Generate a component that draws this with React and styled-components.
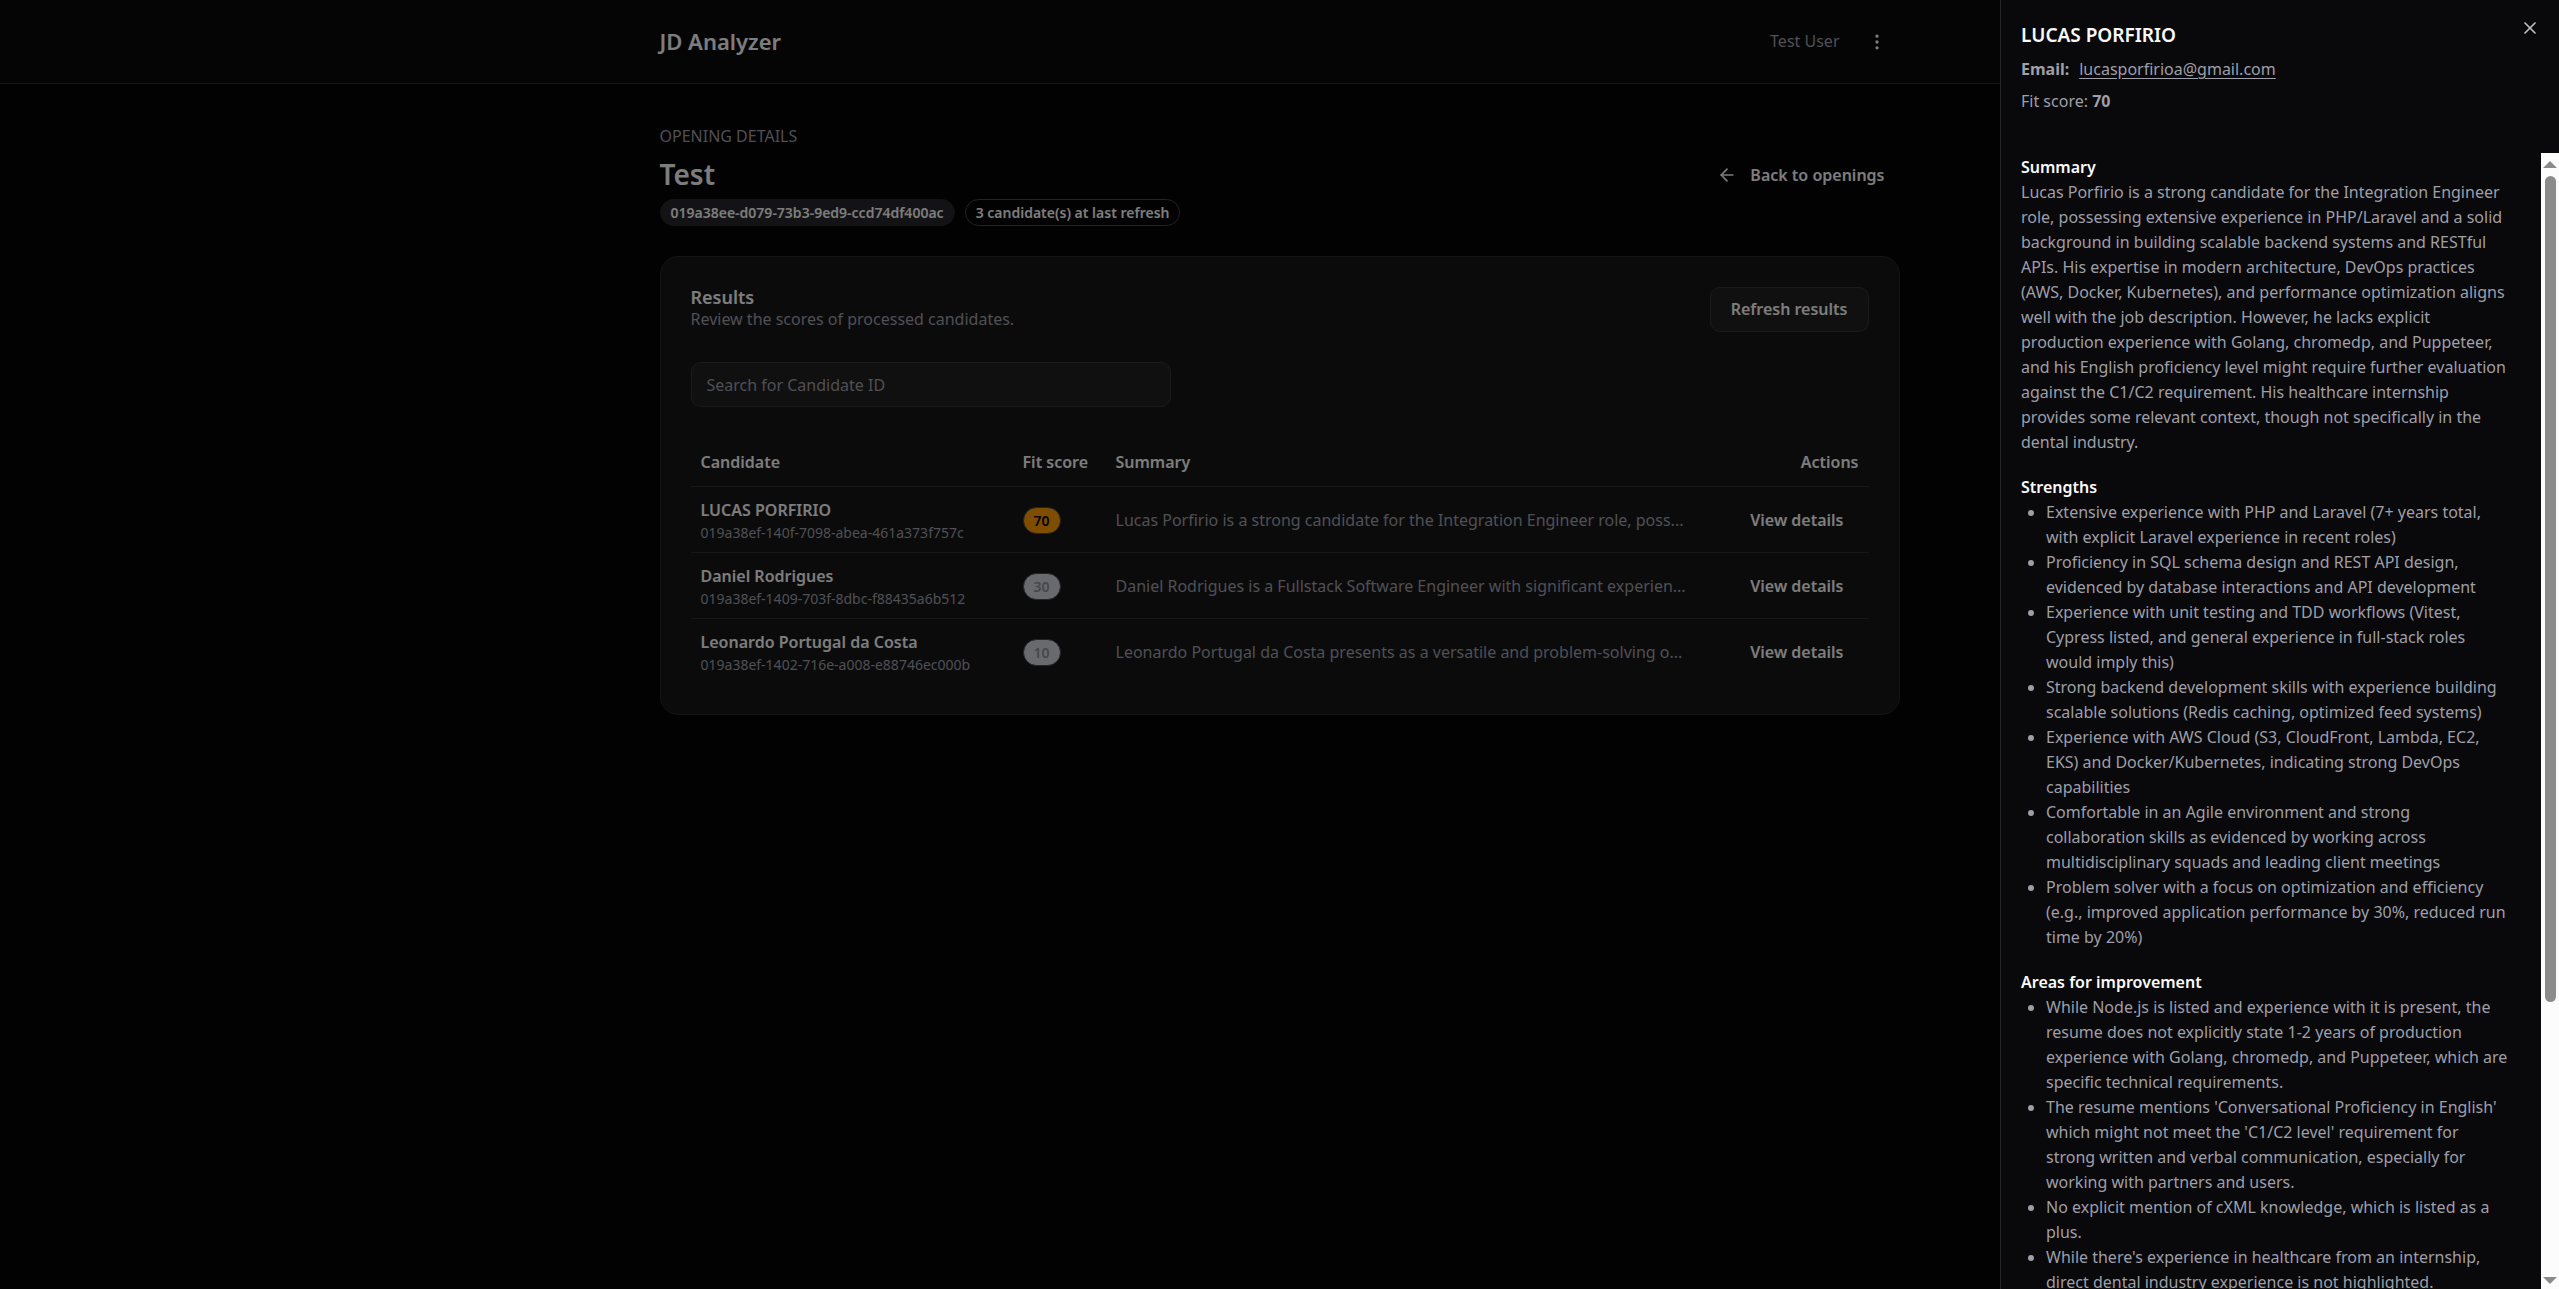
import React from "react";
import styled, { createGlobalStyle } from "styled-components";
import { ArrowLeft, EllipsisVertical, X } from "lucide-react";

const GlobalStyle = createGlobalStyle`
  *, *::before, *::after { box-sizing: border-box; }
  body {
    margin: 0;
    background: #040405;
    color: #fafafa;
    font-family: "Noto Sans", "Open Sans", sans-serif;
    font-size: 16px;
    line-height: 25px;
  }
  h1, h2, h3, p, ul { margin: 0; padding: 0; font-size: inherit; font-weight: inherit; }
  button, input { font: inherit; color: inherit; }
  button { cursor: pointer; }
`;

const Page = styled.div`
  min-height: 100vh;
`;

const Container = styled.div`
  width: 100%;
  max-width: 1280px;
  margin: 0 auto;
  padding: 0 20px;
`;

const TopBar = styled.header`
  background: #0a0a0d;
  border-bottom: 1px solid #2c2c2f;
`;

const TopBarRow = styled(Container)`
  display: flex;
  align-items: center;
  justify-content: space-between;
  height: 83px;
`;

const Brand = styled.span`
  font-size: 22px;
  font-weight: 600;
`;

const UserArea = styled.div`
  display: flex;
  align-items: center;
  gap: 15px;
  color: #9f9fa9;
`;

const IconButton = styled.button`
  display: inline-flex;
  align-items: center;
  justify-content: center;
  width: 45px;
  height: 45px;
  padding: 0;
  border: 0;
  background: none;
  color: #fafafa;
`;

const Main = styled(Container).attrs({ as: "main" })`
  display: flex;
  flex-direction: column;
  gap: 30px;
  padding-top: 40px;
  padding-bottom: 40px;
`;

const PageHead = styled.div`
  display: flex;
  align-items: center;
  justify-content: space-between;
`;

const HeadText = styled.div`
  display: flex;
  flex-direction: column;
  gap: 5px;
`;

const Eyebrow = styled.p`
  color: #9f9fa9;
  text-transform: uppercase;
`;

const PageTitle = styled.h1`
  font-size: 28px;
  font-weight: 600;
  line-height: 40px;
`;

const BadgeRow = styled.div`
  display: flex;
  gap: 10px;
`;

const tones = {
  muted: { bg: "#27272a", fg: "#fafafa", line: "#27272a" },
  outline: { bg: "transparent", fg: "#fafafa", line: "#45454f" },
  amber: { bg: "#fe9a00", fg: "#000000", line: "#45454f" },
  gray: { bg: "#d1d5dc", fg: "#8f8f98", line: "#45454f" },
};

const Badge = styled.span`
  display: inline-flex;
  align-items: center;
  height: 27px;
  padding: 0 10px;
  border: 1px solid ${(p) => tones[p.$tone].line};
  border-radius: 14px;
  background: ${(p) => tones[p.$tone].bg};
  color: ${(p) => tones[p.$tone].fg};
  font-size: 14px;
  font-weight: 600;
  line-height: 20px;
`;

const GhostButton = styled.button`
  display: inline-flex;
  align-items: center;
  gap: 13px;
  height: 45px;
  padding: 0 15px;
  border: 0;
  border-radius: 10px;
  background: none;
  font-weight: 600;
`;

const OutlineButton = styled(GhostButton)`
  padding: 0 20px;
  border: 1px solid #35353a;
  background: #202022;
`;

const Card = styled.section`
  display: flex;
  flex-direction: column;
  gap: 30px;
  padding: 30px;
  border: 1px solid #28282a;
  border-radius: 18px;
  background: #171719;
`;

const CardHead = styled.div`
  display: flex;
  justify-content: space-between;
`;

const CardTitle = styled.h2`
  font-size: 18px;
  font-weight: 600;
  line-height: 20px;
`;

const Muted = styled.p`
  color: #9f9fa9;
`;

const SearchInput = styled.input`
  width: 100%;
  max-width: 480px;
  height: 45px;
  padding: 0 15px;
  border: 1px solid #35353a;
  border-radius: 10px;
  background: #202022;
  &::placeholder { color: #9f9fa9; opacity: 1; }
`;

const Table = styled.table`
  width: 100%;
  table-layout: fixed;
  border-collapse: separate;
  border-spacing: 0;
`;

const Col = styled.col`
  width: ${(p) => p.$width};
`;

const Th = styled.th`
  height: 50px;
  padding: 2px 10px 0;
  border-bottom: 1px solid #2c2c2f;
  font-weight: 600;
  text-align: ${(p) => p.$align || "left"};
  white-space: nowrap;
`;

const Td = styled.td`
  padding: 11px 10px 9px;
  border-bottom: 1px solid #2c2c2f;
  color: #9f9fa9;
  text-align: ${(p) => p.$align || "left"};
  vertical-align: middle;
  white-space: nowrap;
  tr:last-child > & { border-bottom: 0; }
`;

const ActionTd = styled(Td)`
  padding: 2px 10px 0;
  color: #fafafa;
`;

const CandidateName = styled.div`
  color: #fafafa;
  font-weight: 600;
`;

const CandidateId = styled.div`
  font-size: 14px;
  line-height: 20px;
`;

const Backdrop = styled.div`
  position: fixed;
  inset: 0;
  background: rgba(0, 0, 0, 0.5);
`;

const Sheet = styled.aside`
  position: fixed;
  top: 0;
  right: 0;
  bottom: 0;
  display: flex;
  flex-direction: column;
  width: 559px;
  max-width: 100%;
  border-left: 1px solid #252528;
  background: #09090b;
`;

const SheetHead = styled.div`
  display: flex;
  flex-direction: column;
  gap: 7px;
  padding: 20px 20px 39px;
  color: #9f9fa9;
`;

const SheetTitle = styled.h2`
  color: #fafafa;
  font-size: 19px;
  font-weight: 600;
  line-height: 30px;
`;

const EmailRow = styled.p`
  display: flex;
  gap: 10px;
`;

const EmailLink = styled.a`
  color: inherit;
  text-underline-offset: 3px;
`;

const CloseButton = styled.button`
  position: absolute;
  top: 18px;
  right: 19px;
  display: inline-flex;
  padding: 0;
  border: 0;
  background: none;
  color: #c0c0c4;
`;

const SheetBody = styled.div`
  flex: 1;
  display: flex;
  min-height: 0;
`;

const SheetScroll = styled.div`
  flex: 1;
  display: flex;
  flex-direction: column;
  gap: 20px;
  min-width: 0;
  padding: 2px 32px 20px 20px;
  overflow-y: auto;
  scrollbar-width: none;
  color: #9f9fa9;
`;

const SectionTitle = styled.h3`
  color: #fafafa;
  font-weight: 600;
`;

const Bullets = styled.ul`
  padding-left: 25px;
  list-style: disc;
`;

const ScrollTrack = styled.div`
  display: flex;
  flex-direction: column;
  align-items: center;
  justify-content: space-between;
  width: 18px;
  padding: 8px 0 5px;
  background: #fcfcfc;
`;

const ScrollArrow = styled.span`
  border: 7px solid transparent;
  border-top: ${(p) => (p.$down ? "7px solid #8b8b8b" : "0")};
  border-bottom: ${(p) => (p.$down ? "0" : "7px solid #8b8b8b")};
`;

const ScrollLane = styled.div`
  flex: 1;
  width: 11px;
  padding: 8px 0;
`;

const ScrollThumb = styled.div`
  height: 75.6%;
  border-radius: 6px;
  background: #8b8b8b;
`;

const candidates = [
  {
    name: "LUCAS PORFIRIO",
    id: "019a38ef-140f-7098-abea-461a373f757c",
    score: 70,
    tone: "amber",
    summary: "Lucas Porfirio is a strong candidate for the Integration Engineer role, poss...",
  },
  {
    name: "Daniel Rodrigues",
    id: "019a38ef-1409-703f-8dbc-f88435a6b512",
    score: 30,
    tone: "gray",
    summary: "Daniel Rodrigues is a Fullstack Software Engineer with significant experien...",
  },
  {
    name: "Leonardo Portugal da Costa",
    id: "019a38ef-1402-716e-a008-e88746ec000b",
    score: 10,
    tone: "gray",
    summary: "Leonardo Portugal da Costa presents as a versatile and problem-solving o...",
  },
];

const summary =
  "Lucas Porfirio is a strong candidate for the Integration Engineer role, possessing extensive experience in PHP/Laravel and a solid background in building scalable backend systems and RESTful APIs. His expertise in modern architecture, DevOps practices (AWS, Docker, Kubernetes), and performance optimization aligns well with the job description. However, he lacks explicit production experience with Golang, chromedp, and Puppeteer, and his English proficiency level might require further evaluation against the C1/C2 requirement. His healthcare internship provides some relevant context, though not specifically in the dental industry.";

const strengths = [
  "Extensive experience with PHP and Laravel (7+ years total, with explicit Laravel experience in recent roles)",
  "Proficiency in SQL schema design and REST API design, evidenced by database interactions and API development",
  "Experience with unit testing and TDD workflows (Vitest, Cypress listed, and general experience in full-stack roles would imply this)",
  "Strong backend development skills with experience building scalable solutions (Redis caching, optimized feed systems)",
  "Experience with AWS Cloud (S3, CloudFront, Lambda, EC2, EKS) and Docker/Kubernetes, indicating strong DevOps capabilities",
  "Comfortable in an Agile environment and strong collaboration\u00a0skills as evidenced by working across multidisciplinary squads and leading client meetings",
  "Problem solver with a focus on optimization and efficiency (e.g., improved application performance by 30%, reduced run time by 20%)",
];

const improvements = [
  "While Node.js is listed and experience with it is present, the resume does not explicitly state 1-2 years of production experience with Golang, chromedp, and Puppeteer, which are specific technical requirements.",
  "The resume mentions 'Conversational Proficiency in English' which might not meet the 'C1/C2 level' requirement for strong written and verbal communication, especially for working with partners and users.",
  "No explicit mention of cXML knowledge, which is listed as a plus.",
  "While there's experience in healthcare from an internship, direct dental industry experience is not highlighted.",
];

function ListSection({ title, items }) {
  return (
    <section>
      <SectionTitle>{title}</SectionTitle>
      <Bullets>
        {items.map((item) => (
          <li key={item}>{item}</li>
        ))}
      </Bullets>
    </section>
  );
}

export default function App() {
  return (
    <>
      <GlobalStyle />
      <Page>
        <TopBar>
          <TopBarRow>
            <Brand>JD Analyzer</Brand>
            <UserArea>
              <span>Test User</span>
              <IconButton aria-label="Open menu">
                <EllipsisVertical size={20} />
              </IconButton>
            </UserArea>
          </TopBarRow>
        </TopBar>
        <Main>
          <PageHead>
            <HeadText>
              <Eyebrow>Opening details</Eyebrow>
              <PageTitle>Test</PageTitle>
              <BadgeRow>
                <Badge $tone="muted">019a38ee-d079-73b3-9ed9-ccd74df400ac</Badge>
                <Badge $tone="outline">3 candidate(s) at last refresh</Badge>
              </BadgeRow>
            </HeadText>
            <GhostButton>
              <ArrowLeft size={20} />
              Back to openings
            </GhostButton>
          </PageHead>
          <Card>
            <CardHead>
              <div>
                <CardTitle>Results</CardTitle>
                <Muted>Review the scores of processed candidates.</Muted>
              </div>
              <OutlineButton>Refresh results</OutlineButton>
            </CardHead>
            <SearchInput aria-label="Search for Candidate ID" placeholder="Search for Candidate ID" />
            <Table>
              <colgroup>
                <Col $width="322px" />
                <Col $width="93px" />
                <Col />
                <Col $width="145px" />
              </colgroup>
              <thead>
                <tr>
                  <Th>Candidate</Th>
                  <Th>Fit score</Th>
                  <Th>Summary</Th>
                  <Th $align="right">Actions</Th>
                </tr>
              </thead>
              <tbody>
                {candidates.map((c) => (
                  <tr key={c.id}>
                    <Td>
                      <CandidateName>{c.name}</CandidateName>
                      <CandidateId>{c.id}</CandidateId>
                    </Td>
                    <Td>
                      <Badge $tone={c.tone}>{c.score}</Badge>
                    </Td>
                    <Td>{c.summary}</Td>
                    <ActionTd $align="right">
                      <GhostButton>View details</GhostButton>
                    </ActionTd>
                  </tr>
                ))}
              </tbody>
            </Table>
          </Card>
        </Main>
      </Page>
      <Backdrop />
      <Sheet role="dialog" aria-labelledby="sheet-title">
        <SheetHead>
          <SheetTitle id="sheet-title">LUCAS PORFIRIO</SheetTitle>
          <EmailRow>
            <strong>Email:</strong>
            <EmailLink href="mailto:lucasporfirioa@gmail.com">lucasporfirioa@gmail.com</EmailLink>
          </EmailRow>
          <p>
            Fit score: <strong>70</strong>
          </p>
        </SheetHead>
        <SheetBody>
          <SheetScroll>
            <section>
              <SectionTitle>Summary</SectionTitle>
              <p>{summary}</p>
            </section>
            <ListSection title="Strengths" items={strengths} />
            <ListSection title="Areas for improvement" items={improvements} />
          </SheetScroll>
          <ScrollTrack aria-hidden="true">
            <ScrollArrow />
            <ScrollLane>
              <ScrollThumb />
            </ScrollLane>
            <ScrollArrow $down />
          </ScrollTrack>
        </SheetBody>
        <CloseButton aria-label="Close">
          <X size={20} strokeWidth={2} />
        </CloseButton>
      </Sheet>
    </>
  );
}
